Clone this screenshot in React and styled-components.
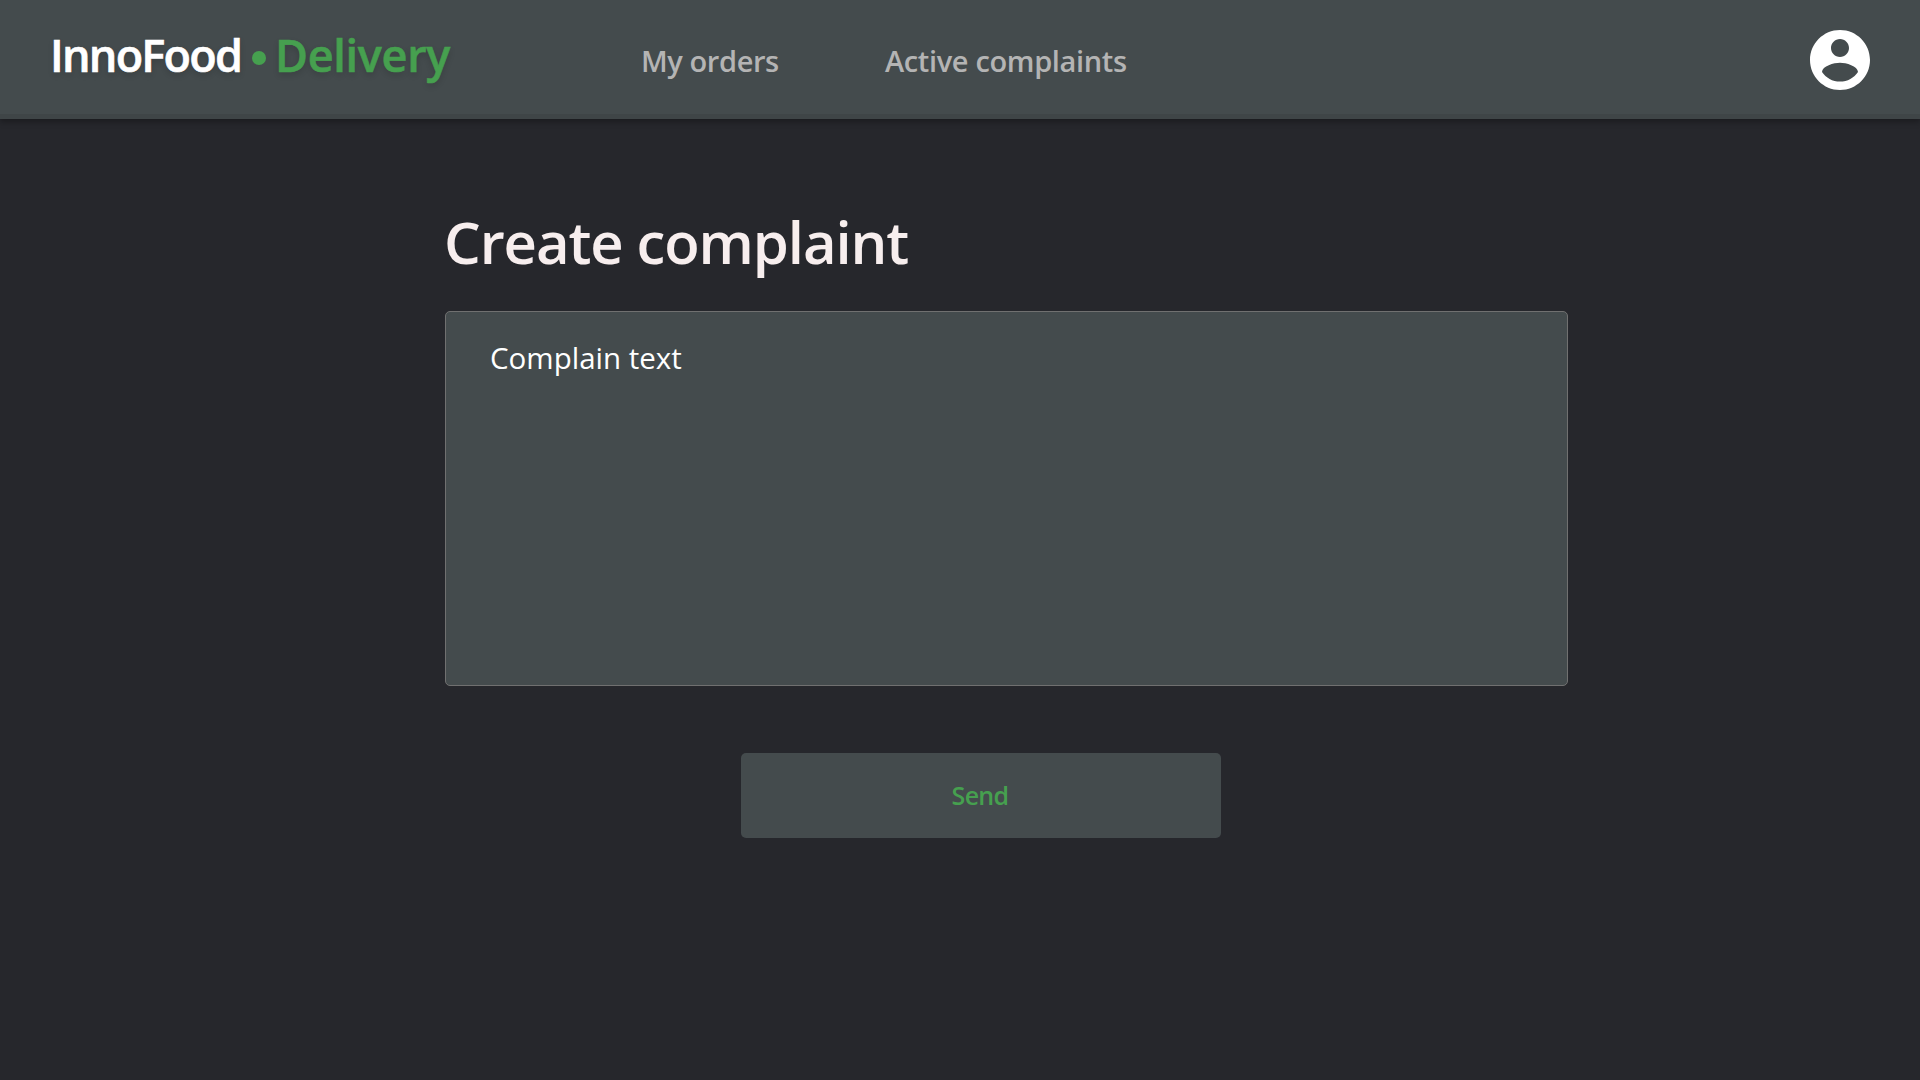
import React from 'react';
import styled, { createGlobalStyle } from 'styled-components';

const GlobalStyle = createGlobalStyle`
  *, *::before, *::after { box-sizing: border-box; }
  body {
    margin: 0;
    background: #26272c;
    font-family: "Open Sans", "Noto Sans", sans-serif;
  }
`;

const Page = styled.div`
  min-height: 1080px;
  overflow: hidden;
`;

const Header = styled.header`
  display: flex;
  align-items: flex-start;
  height: 119px;
  padding: 0 44px 0 50px;
  background: #444b4d;
  border-bottom: 5px solid #3f4547;
  box-shadow: 0 3px 6px rgba(0, 0, 0, 0.3);
`;

const Logo = styled.div`
  display: flex;
  width: 591px;
  padding-top: 23px;
  font-size: 45px;
  font-weight: 600;
  line-height: 64px;
  white-space: nowrap;
  text-shadow: 0 3px 6px rgba(0, 0, 0, 0.16);
  -webkit-text-stroke: 0.6px currentColor;
`;

const Brand = styled.span`
  width: 202px;
  color: #fff;
  letter-spacing: -1.75px;
`;

const Dot = styled.span`
  width: 14px;
  height: 14px;
  margin: 28px 9px 0 0;
  border-radius: 50%;
  background: #46a04f;
`;

const Product = styled.span`
  color: #46a04f;
  letter-spacing: -0.3px;
`;

const Nav = styled.nav`
  display: flex;
  flex: 1;
  padding-top: 40px;
`;

const NavLink = styled.a`
  width: ${({ $width }) => $width};
  color: #b4b4b4;
  font-size: 29px;
  font-weight: 600;
  line-height: 41px;
  letter-spacing: ${({ $spacing }) => $spacing};
  white-space: nowrap;
`;

const Avatar = styled.svg`
  width: 72px;
  height: 72px;
  margin-top: 24px;
  fill: #fff;
`;

const Main = styled.main`
  width: 1123px;
  margin-left: 445px;
  padding-top: 83px;
`;

const Title = styled.h1`
  margin: 0 0 29px;
  color: #f7eeee;
  font-size: 58px;
  font-weight: 600;
  line-height: 80px;
  letter-spacing: -1.1px;
  text-indent: -1px;
  white-space: nowrap;
`;

const Field = styled.div`
  height: 375px;
  padding: 25px 44px;
  border: 1px solid #707070;
  border-radius: 5px;
  background: #444b4d;
  color: #fff;
  font-size: 29.5px;
  line-height: 41px;
  letter-spacing: 0;
`;

const SendButton = styled.button`
  display: flex;
  align-items: center;
  justify-content: center;
  width: 480px;
  height: 85px;
  margin: 67px 0 0 296px;
  padding: 0 2px 2px 0;
  border: 0;
  border-radius: 5px;
  background: #444b4d;
  color: #46a04f;
  font: 600 25px/34px "Open Sans", "Noto Sans", sans-serif;
  letter-spacing: -0.7px;
`;

export default function App() {
  return (
    <>
      <GlobalStyle />
      <Page>
        <Header>
          <Logo>
            <Brand>InnoFood</Brand>
            <Dot />
            <Product>Delivery</Product>
          </Logo>
          <Nav>
            <NavLink $width="244px" $spacing="-0.4px">My orders</NavLink>
            <NavLink $spacing="-0.35px">Active complaints</NavLink>
          </Nav>
          <Avatar viewBox="0 0 24 24">
            <path d="M12 2C6.48 2 2 6.48 2 12s4.48 10 10 10 10-4.48 10-10S17.52 2 12 2zm0 3c1.66 0 3 1.34 3 3s-1.34 3-3 3-3-1.34-3-3 1.34-3 3-3zm0 14.2c-2.5 0-4.71-1.28-6-3.22.03-1.99 4-3.08 6-3.08 1.99 0 5.97 1.09 6 3.08-1.29 1.94-3.5 3.22-6 3.22z" />
          </Avatar>
        </Header>
        <Main>
          <Title>Create complaint</Title>
          <Field>Complain text</Field>
          <SendButton>Send</SendButton>
        </Main>
      </Page>
    </>
  );
}
